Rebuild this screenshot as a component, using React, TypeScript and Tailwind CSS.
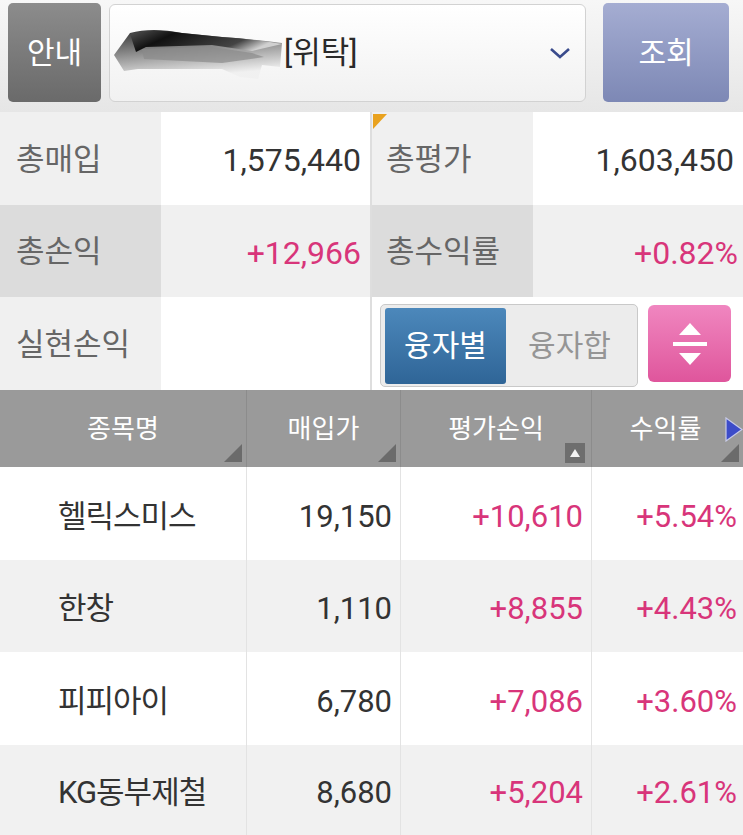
import React from "react";

const FONT = { fontFamily: '"Roboto","Noto Sans CJK KR",sans-serif' };

function Corner() {
  return (
    <svg className="absolute right-[4px] bottom-[5px]" width="18" height="18" viewBox="0 0 18 18">
      <polygon points="18,0 18,18 0,18" fill="#6b6b6b" />
    </svg>
  );
}

const rows = [
  { name: "헬릭스미스", price: "19,150", pl: "+10,610", rate: "+5.54%" },
  { name: "한창", price: "1,110", pl: "+8,855", rate: "+4.43%" },
  { name: "피피아이", price: "6,780", pl: "+7,086", rate: "+3.60%" },
  { name: "KG동부제철", price: "8,680", pl: "+5,204", rate: "+2.61%" },
];

export default function App() {
  return (
    <div className="w-[743px] h-[835px] overflow-hidden bg-white font-normal" style={FONT}>
      {/* Top bar */}
      <div className="h-[112px] flex items-start pt-[3px] pl-[8px] bg-gradient-to-b from-[#f7f7f7] to-[#e6e6e6]">
        <div className="w-[93px] h-[99px] rounded-[5px] bg-gradient-to-b from-[#8c8c8c] to-[#6a6a6a] flex items-center justify-center text-white text-[30px]">
          안내
        </div>
        <div className="ml-[8px] mt-[1px] w-[477px] h-[98px] rounded-[6px] border border-[#d2d2d2] bg-gradient-to-b from-[#ffffff] to-[#f1f1f1] flex items-center pl-[2px] pr-[12px]">
          <svg width="172" height="56" viewBox="0 0 172 56" className="shrink-0">
            <defs>
              <linearGradient id="rg1" x1="0" y1="0" x2="1" y2="0.3">
                <stop offset="0" stopColor="#555" />
                <stop offset="0.3" stopColor="#111" />
                <stop offset="0.8" stopColor="#444" />
                <stop offset="1" stopColor="#d0d0d0" />
              </linearGradient>
              <linearGradient id="rg2" x1="0" y1="0" x2="0.3" y2="1">
                <stop offset="0" stopColor="#1a1a1a" />
                <stop offset="1" stopColor="#f0f0f0" />
              </linearGradient>
            </defs>
            <path d="M2 30 L18 8 Q40 2 70 8 L110 12 Q140 14 170 18 L168 42 L150 40 L146 54 L128 52 L110 44 L26 44 L12 46 Z" fill="url(#rg2)" opacity="0.9" />
            <path d="M18 9 Q40 3 70 8 L110 12 Q140 14 170 19 L140 26 L100 20 L34 22 L24 27 Z" fill="url(#rg1)" />
            <path d="M30 24 L100 22 L140 28 L152 32 L110 38 L32 34 Z" fill="#8a8a8a" opacity="0.7" />
          </svg>
          <span className="text-[31px] text-[#2a2a2a]">[위탁]</span>
          <div className="flex-1" />
          <svg width="22" height="14" viewBox="0 0 22 14" className="mr-[2px]">
            <polyline points="2,3 11,11 20,3" fill="none" stroke="#3a4b8c" strokeWidth="2.6" />
          </svg>
        </div>
        <div className="ml-[17px] w-[126px] h-[99px] rounded-[5px] bg-gradient-to-b from-[#a5add2] to-[#7d88b5] flex items-center justify-center text-white text-[30px]">
          조회
        </div>
      </div>

      {/* Summary */}
      <div className="grid grid-cols-[161px_209px_2px_161px_210px] text-[31px]">
        {/* row 1 */}
        <div className="h-[93px] bg-[#f0f0f0] flex items-center pl-[16px] pt-[3px] text-[#666]">총매입</div>
        <div className="h-[93px] bg-white flex items-center justify-end pr-[9px] pt-[3px] text-[32px] text-[#333]">1,575,440</div>
        <div className="bg-[#dedede]" />
        <div className="relative h-[93px] bg-[#f0f0f0] flex items-center pl-[14px] pt-[3px] text-[#666]">
          <svg className="absolute left-[1px] top-[2px]" width="14" height="15" viewBox="0 0 14 15">
            <polygon points="0,0 14,0 0,15" fill="#e9a21f" />
          </svg>
          총평가
        </div>
        <div className="h-[93px] bg-white flex items-center justify-end pr-[9px] pt-[3px] text-[32px] text-[#333]">1,603,450</div>
        {/* row 2 */}
        <div className="h-[92px] bg-[#dcdcdc] flex items-center pl-[16px] pt-[3px] text-[#666]">총손익</div>
        <div className="h-[92px] bg-[#f0f0f0] flex items-center justify-end pr-[9px] pt-[3px] text-[32px] text-[#d8357a]">+12,966</div>
        <div className="bg-[#dedede]" />
        <div className="h-[92px] bg-[#dcdcdc] flex items-center pl-[14px] pt-[3px] text-[#666]">총수익률</div>
        <div className="h-[92px] bg-[#f0f0f0] flex items-center justify-end pr-[5px] pt-[3px] text-[32px] text-[#d8357a]">+0.82%</div>
        {/* row 3 */}
        <div className="h-[93px] bg-[#f0f0f0] flex items-center pl-[16px] pt-[3px] text-[#666]">실현손익</div>
        <div className="h-[93px] bg-white" />
        <div className="bg-[#dedede]" />
        <div className="col-span-2 h-[93px] bg-white flex items-start pt-[7px] pl-[8px]">
          <div className="w-[258px] h-[83px] rounded-[5px] border border-[#c9c9c9] bg-[#ececec] flex items-center p-[4px]">
            <div className="w-[121px] h-[76px] rounded-[3px] bg-gradient-to-b from-[#4c88bb] to-[#2f6597] flex items-center justify-center text-white text-[30px]">
              융자별
            </div>
            <div className="flex-1 flex items-center justify-center text-[#959595] text-[30px]">융자합</div>
          </div>
          <div className="ml-[10px] mt-[1px] w-[83px] h-[77px] rounded-[6px] bg-gradient-to-b from-[#f086c0] to-[#df559c] flex items-center justify-center">
            <svg width="40" height="46" viewBox="0 0 40 46">
              <polygon points="20,2 31,14 9,14" fill="white" />
              <rect x="3" y="21" width="34" height="4" fill="white" />
              <polygon points="9,32 31,32 20,44" fill="white" />
            </svg>
          </div>
        </div>
      </div>

      {/* Table header */}
      <div className="grid grid-cols-[247px_154px_191px_151px] h-[77px] bg-[#9a9a9a] text-white text-[26px]">
        <div className="relative flex items-center justify-center pt-[2px] border-r border-[#8c8c8c]">
          종목명
          <Corner />
        </div>
        <div className="relative flex items-center justify-center pt-[2px] border-r border-[#8c8c8c]">
          매입가
          <Corner />
        </div>
        <div className="relative flex items-center justify-center pt-[2px] border-r border-[#8c8c8c]">
          평가손익
          <div className="absolute right-[6px] bottom-[4px] w-[20px] h-[20px] bg-[#6e6e6e] flex items-center justify-center">
            <svg width="10" height="8" viewBox="0 0 10 8">
              <polygon points="5,0 10,8 0,8" fill="#f2f2f2" />
            </svg>
          </div>
        </div>
        <div className="relative flex items-center justify-center pt-[2px] pr-[4px]">
          수익률
          <svg className="absolute right-0 top-[27px]" width="18" height="25" viewBox="0 0 18 25">
            <polygon points="1,1 17,12.5 1,24" fill="#3d4cc9" stroke="#c8cbe8" strokeWidth="1.2" />
          </svg>
          <Corner />
        </div>
      </div>

      {/* Rows */}
      {rows.map((r, i) => (
        <div
          key={r.name}
          className={`grid grid-cols-[247px_154px_191px_151px] pt-[7px] ${i === 3 ? "h-[90px]" : i === 1 ? "h-[92px]" : "h-[93px]"} ${i % 2 === 0 ? "bg-white" : "bg-[#f1f1f1]"} text-[31px]`}
        >
          <div className="flex items-center pl-[58px] text-[#333] border-r border-[#e3e3e3] tracking-[-1px] -mt-[7px] pt-[7px]">{r.name}</div>
          <div className="flex items-center justify-end pr-[8px] text-[#333] border-r border-[#e3e3e3] -mt-[7px] pt-[7px]">{r.price}</div>
          <div className="flex items-center justify-end pr-[8px] text-[#d8357a] border-r border-[#e3e3e3] -mt-[7px] pt-[7px]">{r.pl}</div>
          <div className="flex items-center justify-end pr-[6px] text-[#d8357a] -mt-[7px] pt-[7px]">{r.rate}</div>
        </div>
      ))}
    </div>
  );
}
